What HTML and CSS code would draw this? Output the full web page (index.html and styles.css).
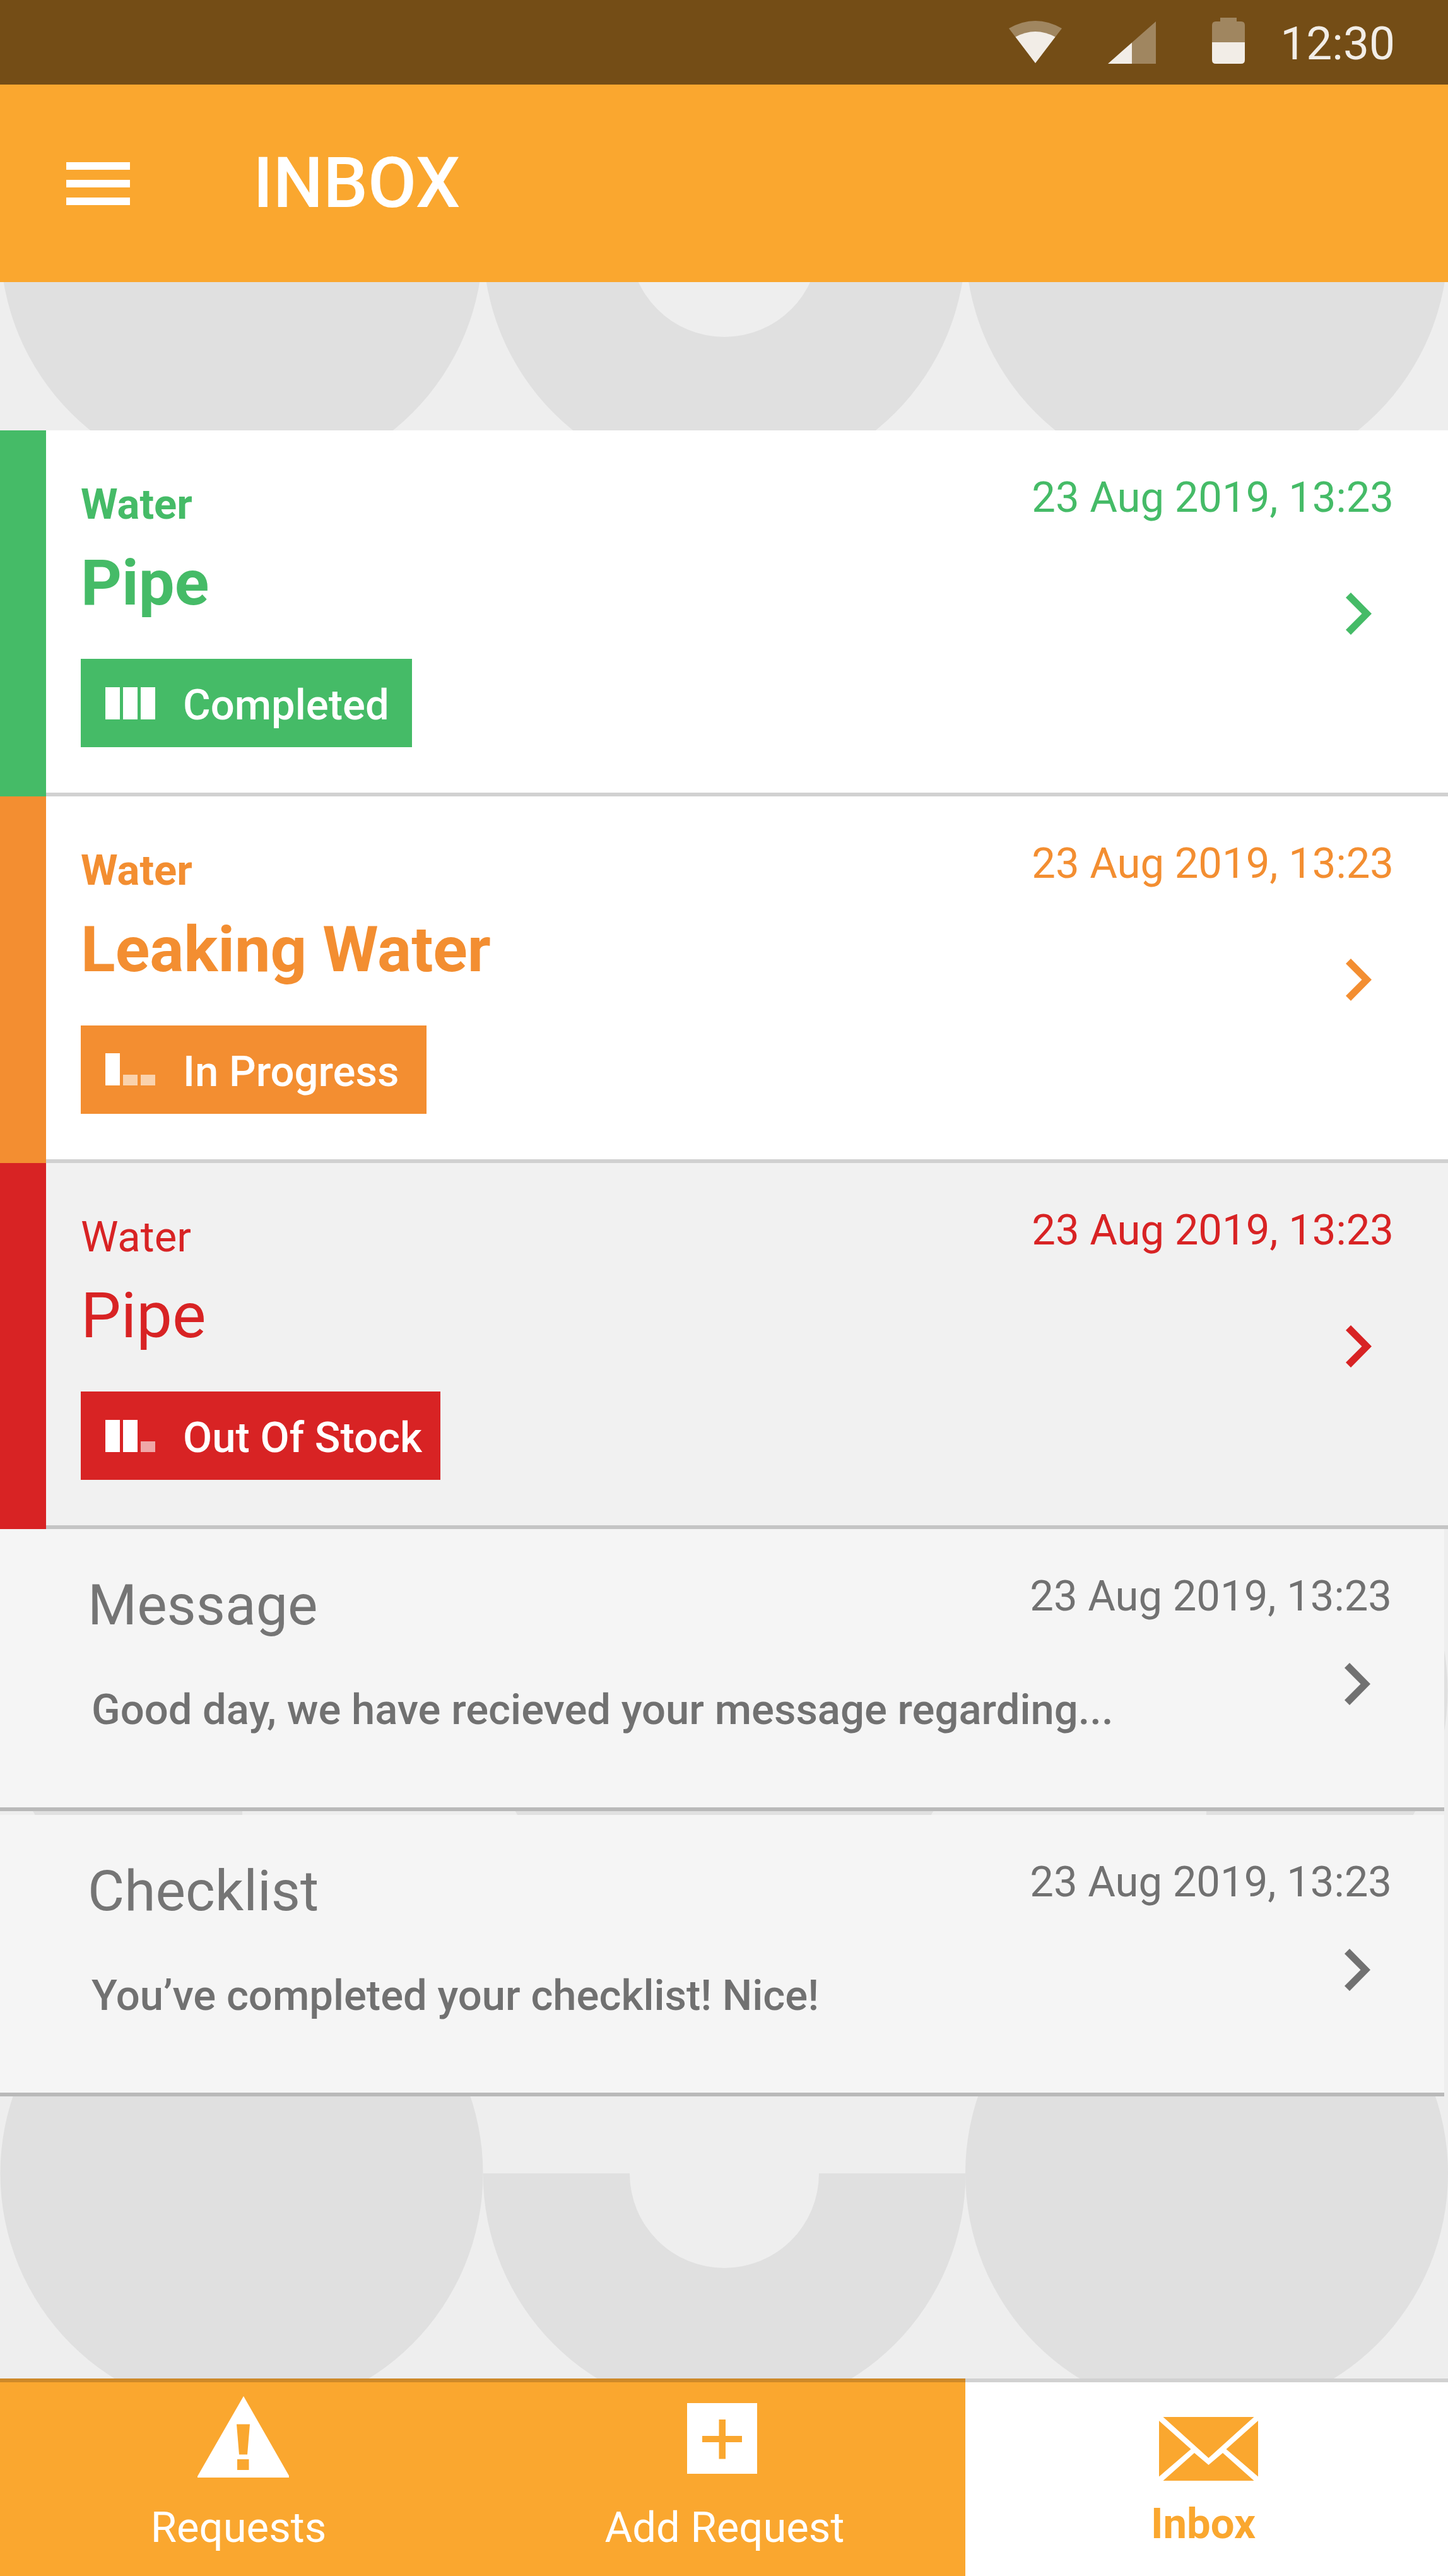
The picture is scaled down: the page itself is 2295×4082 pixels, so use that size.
FILE: index.html
```html
<!DOCTYPE html>
<html lang="en">
<head>
  <meta charset="UTF-8" />
  <meta name="viewport" content="width=device-width, initial-scale=1.0"/>
  <title>Inbox</title>
  <link rel="stylesheet" href="styles.css">
</head>
<body>

  <!-- Background pattern -->
  <svg class="pattern" viewBox="0 0 2295 4082">
    <circle cx="383" cy="384" r="382.5" />
    <path d="M765.5 384a382.5 382.5 0 0 0 765 0H1298a150 150 0 0 1-300 0z" />
    <circle cx="1912.5" cy="384" r="382.5" />
    <path d="M1 2679a382.5 382.5 0 0 0 383 382.5V2679z" />
    <circle cx="1148" cy="2679" r="382.5" />
    <path d="M1912 2296.5a382.5 382.5 0 0 1 0 765z" />
    <circle cx="383" cy="3444" r="382.5" />
    <path d="M765.5 3444a382.5 382.5 0 0 0 765 0H1298a150 150 0 0 1-300 0z" />
    <circle cx="1912.5" cy="3444" r="382.5" />
  </svg>

  <!-- Status Bar -->
  <div class="status-bar">
    <svg class="wifi" viewBox="0 0 84 67">
      <path class="dim" d="M0 12Q42-12 84 12L42 67z" />
      <path class="lit" d="M10.5 25.5Q42 8.500 73.500 25.500L42 67z" />
    </svg>
    <svg class="signal" viewBox="0 0 76 67">
      <path class="dim" d="M38 33.500L76 0v67H38z" />
      <path class="lit" d="M0 67L38 33.500V67z" />
    </svg>
    <svg class="battery" viewBox="0 0 52 73">
      <path class="dim" d="M0 39V12q0-6 6-6h7V0h26v6h7q6 0 6 6v27z" />
      <path class="lit" d="M0 39h52v28q0 6-6 6H6q-6 0-6-6z" />
    </svg>
    <span class="time">12:30</span>
  </div>

  <!-- App Bar -->
  <header class="app-bar">
    <div class="menu-btn"><i></i><i></i><i></i></div>
    <h1>INBOX</h1>
  </header>

  <!-- Inbox List -->
  <main class="inbox">
    <div class="request green">
      <div class="request-body">
        <div class="info">
          <p class="category">Water</p>
          <h2>Pipe</h2>
          <div class="badge completed">
            <div class="steps"><i></i><i></i><i></i></div>
            Completed
          </div>
        </div>
        <div class="side">
          <span class="date">23 Aug 2019, 13:23</span>
          <svg class="arrow" viewBox="0 0 41 67"><path d="M8 0L41 33.500L8 67L0 59L25.500 33.500L0 8z" /></svg>
        </div>
      </div>
    </div>

    <div class="request orange">
      <div class="request-body">
        <div class="info">
          <p class="category">Water</p>
          <h2>Leaking Water</h2>
          <div class="badge progress">
            <div class="steps"><i></i><i class="low"></i><i class="low"></i></div>
            In Progress
          </div>
        </div>
        <div class="side">
          <span class="date">23 Aug 2019, 13:23</span>
          <svg class="arrow" viewBox="0 0 41 67"><path d="M8 0L41 33.500L8 67L0 59L25.500 33.500L0 8z" /></svg>
        </div>
      </div>
    </div>

    <div class="request red read">
      <div class="request-body">
        <div class="info">
          <p class="category">Water</p>
          <h2>Pipe</h2>
          <div class="badge stock">
            <div class="steps"><i></i><i></i><i class="low"></i></div>
            Out Of Stock
          </div>
        </div>
        <div class="side">
          <span class="date">23 Aug 2019, 13:23</span>
          <svg class="arrow" viewBox="0 0 41 67"><path d="M8 0L41 33.500L8 67L0 59L25.500 33.500L0 8z" /></svg>
        </div>
      </div>
    </div>

    <div class="message">
      <div class="info">
        <h3>Message</h3>
        <p class="preview">Good day, we have recieved your message regarding...</p>
      </div>
      <div class="side">
        <span class="date">23 Aug 2019, 13:23</span>
        <svg class="arrow" viewBox="0 0 41 67"><path d="M8 0L41 33.500L8 67L0 59L25.500 33.500L0 8z" /></svg>
      </div>
    </div>

    <div class="message">
      <div class="info">
        <h3>Checklist</h3>
        <p class="preview">You’ve completed your checklist! Nice!</p>
      </div>
      <div class="side">
        <span class="date">23 Aug 2019, 13:23</span>
        <svg class="arrow" viewBox="0 0 41 67"><path d="M8 0L41 33.500L8 67L0 59L25.500 33.500L0 8z" /></svg>
      </div>
    </div>
  </main>

  <!-- Bottom Navigation -->
  <nav class="tabs">
    <a class="tab requests">
      <svg class="icon-warning" viewBox="0 0 145 129">
        <path fill-rule="evenodd" d="M73 0L145 126V129H0V127zM62 44.500L66 92.500H79L83 44.500zM63 100V117H81.500V100z" />
      </svg>
      <span>Requests</span>
    </a>
    <a class="tab add">
      <svg class="icon-add" viewBox="0 0 111 112">
        <path fill-rule="evenodd" d="M0 0H111V112H0zM50.500 26V52H24V62H50.500V88.500H61V62H87V52H61V26z" />
      </svg>
      <span>Add Request</span>
    </a>
    <a class="tab active">
      <svg class="icon-mail" viewBox="0 0 157 101">
        <path d="M6.500 0H150.500L78.500 65zM0 6L50.500 51L0 94.500zM157 6L106.500 51L157 94.500zM6.500 101L56 57L78.500 76L101 57L150.500 101z" />
      </svg>
      <span>Inbox</span>
    </a>
  </nav>

</body>
</html>
```
FILE: styles.css
```css
/* Global Styles */
* {
  margin: 0;
  padding: 0;
  box-sizing: border-box;
}

body {
  font-family: Roboto, sans-serif;
  background: #eeeeee;
  width: 2295px;
  height: 4082px;
  display: flex;
  flex-direction: column;
  overflow: hidden;
}

svg {
  display: block;
  flex: none;
}

.pattern {
  position: absolute;
  top: 0;
  left: 0;
  width: 2295px;
  height: 4082px;
  fill: #e0e0e0;
  z-index: -1;
}

/* Status Bar */
.status-bar {
  flex: none;
  height: 134px;
  background: #744d16;
  display: flex;
  justify-content: flex-end;
  padding-right: 84px;
}

.dim {
  fill: rgba(255, 255, 255, 0.32);
}

.lit {
  fill: #f2ede7;
}

.wifi {
  width: 84px;
  height: 67px;
  margin: 33px 73px 0 0;
  overflow: visible;
}

.signal {
  width: 76px;
  height: 67px;
  margin: 33.500px 89px 0 0;
}

.battery {
  width: 52px;
  height: 73px;
  margin: 28px 56px 0 0;
}

.time {
  font-size: 73px;
  line-height: 86px;
  margin-top: 26px;
  color: #f2ede7;
}

/* App Bar */
.app-bar {
  flex: none;
  height: 312.500px;
  background: #faa72f;
  display: flex;
  align-items: flex-start;
}

.menu-btn {
  width: 101px;
  margin: 122.500px 0 0 104.500px;
  display: flex;
  flex-direction: column;
  gap: 16px;
}

.menu-btn i {
  height: 12px;
  background: #ffffff;
}

.app-bar h1 {
  font-size: 112px;
  line-height: 132px;
  font-weight: 500;
  color: #ffffff;
  margin: 90px 0 0 195.500px;
}

/* Inbox List */
.inbox {
  flex: 1;
  padding-top: 235px;
}

.green {
  color: #45bb67;
}

.orange {
  color: #f38e31;
}

.red {
  color: #d82324;
}

.request {
  height: 580.600px;
  border-left: 73px solid currentColor;
}

.request-body {
  height: 100%;
  background: #ffffff;
  border-bottom: 6px solid #d1d1d1;
  padding: 0 86px 0 55px;
  display: flex;
  justify-content: space-between;
}

.read .request-body {
  background: #f1f1f1;
  border-color: #c5c5c5;
}

.category {
  font-size: 67px;
  line-height: 80px;
  font-weight: 700;
  margin-top: 77px;
}

.request h2 {
  font-size: 101px;
  line-height: 120px;
  font-weight: 700;
  margin: 25.500px 0 60px;
}

.read .category,
.read h2 {
  font-weight: 400;
}

.badge {
  width: 525px;
  height: 140px;
  padding: 6px 0 0 39px;
  display: flex;
  align-items: center;
  font-size: 67px;
  font-weight: 500;
  line-height: 80px;
  color: #ffffff;
}

.completed {
  background: #45bb67;
}

.progress {
  width: 548px;
  background: #f38e31;
}

.stock {
  width: 570px;
  background: #d82324;
}

.steps {
  display: flex;
  align-items: flex-end;
  gap: 5px;
  height: 51px;
  margin: 0 44px 6px 0;
}

.steps i {
  width: 23px;
  height: 51px;
  background: #ffffff;
}

.steps .low {
  height: 17px;
  opacity: 0.6;
}

.side {
  display: flex;
  flex-direction: column;
  align-items: flex-end;
  flex: none;
}

.date {
  font-size: 67px;
  line-height: 80px;
  margin-top: 66px;
}

.arrow {
  width: 41px;
  height: 67px;
  margin: 111px 35px 0 0;
  fill: currentColor;
}

/* Messages */
.message {
  width: 2289px;
  height: 446.500px;
  background: #f5f5f5;
  border-bottom: 6px solid #b9b9b9;
  color: #717171;
  margin-bottom: 6px;
  padding: 0 83px 0 139px;
  display: flex;
  justify-content: space-between;
}

.message .info {
  min-width: 0;
}

.message h3 {
  font-size: 89.500px;
  line-height: 106px;
  font-weight: 400;
  color: #757575;
  margin: 68px 0 72px;
}

.preview {
  font-size: 67px;
  line-height: 80px;
  font-weight: 500;
  padding-left: 6px;
  white-space: nowrap;
}

.message .arrow {
  margin-top: 66px;
  margin-right: 34px;
}

/* Bottom Navigation */
.tabs {
  flex: none;
  height: 313px;
  display: flex;
}

.tab {
  width: 765px;
  background: #faa72f;
  border-top: 6px solid #ce8928;
  color: #ffffff;
  fill: currentColor;
  display: flex;
  flex-direction: column;
  align-items: center;
  font-size: 67px;
  line-height: 80px;
}

.active {
  background: #ffffff;
  border-color: #d1d1d1;
  color: #faa72f;
  font-weight: 700;
}

.icon-warning {
  width: 145px;
  height: 129px;
  margin: 22px 0 38.500px 6px;
}

.requests span {
  margin-right: 9px;
}

.icon-add {
  width: 111px;
  height: 112px;
  margin: 33px 6px 44.500px 0;
}

.add span {
  margin-left: 2px;
}

.icon-mail {
  width: 157px;
  height: 101px;
  margin: 55px 0 28px 5px;
}

.active span {
  margin-right: 11px;
}
```
